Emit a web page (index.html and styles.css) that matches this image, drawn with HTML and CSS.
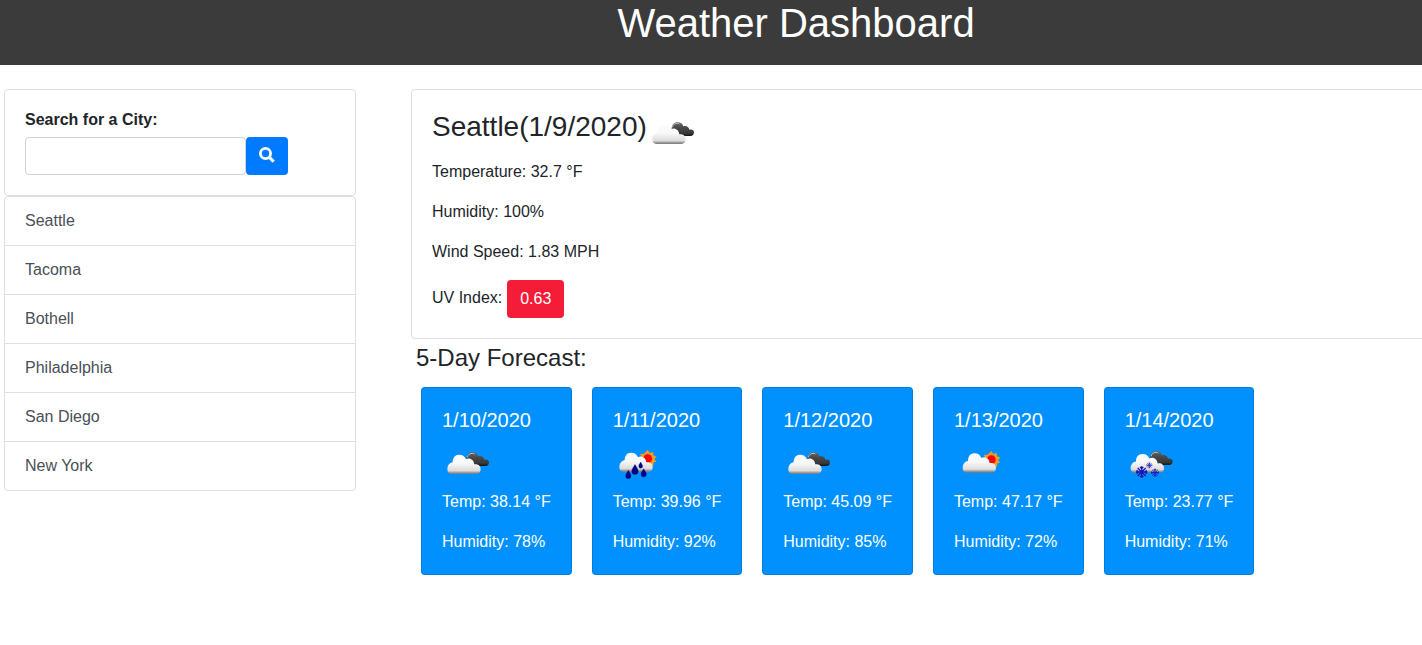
FILE: index.html
```html
<!DOCTYPE html>
<html lang="en">
<head>
<meta charset="utf-8">
<title>Weather Dashboard</title>
<link rel="stylesheet" href="styles.css">
</head>
<body>
<svg class="defs" aria-hidden="true">
  <defs>
    <linearGradient id="light" x1="0" y1="0" x2="0" y2="1">
      <stop offset="0" stop-color="#fcfcfc"/><stop offset=".45" stop-color="#f8f8f8"/><stop offset=".83" stop-color="#dcdcdc"/><stop offset=".93" stop-color="#999"/><stop offset="1" stop-color="#777"/>
    </linearGradient>
    <linearGradient id="dark" x1="0" y1="0" x2="0" y2="1">
      <stop offset="0" stop-color="#666"/><stop offset=".4" stop-color="#484848"/><stop offset=".8" stop-color="#383838"/><stop offset="1" stop-color="#111"/>
    </linearGradient>
    <path id="cloud" fill="url(#light)" d="M34 87C26 87 22 80 22 73C22 62 28 53 38 52C38 38 45 29 57 29C67 29 74 33 78 43C89 37 101 44 103 58C115 56 122 63 122 73C122 81 118 87 109 87Z"/>
    <g id="dark-cloud">
      <path fill="url(#dark)" d="M80 42C80 30 88 22 97 22C107 22 113 26 115 34C123 31 131 35 133 44C141 42 147 46 147 52C147 59 143 63 136 63H100Z"/>
      <path fill="none" stroke="#c4c4c4" stroke-width="3" d="M82 37C84 29 90 25 98 25C101 25 103 26 104 28"/>
    </g>
    <g id="sun">
      <path fill="#ff9d16" d="M0-26L6-17L16-20L17-10L27-6L20 1L26 9L18 11L17 21L7 18L0 26L-6 18L-18 20L-16 9L-26 5L-18-3L-22-14L-11-15Z"/>
      <circle r="16" fill="#ff8c20"/><circle r="13" fill="#fa0505"/>
    </g>
    <path id="drop" fill="#00008c" stroke="#001260" d="M0-12C3-6 8-1 8 5A8 8 0 0 1-8 5C-8-1-3-6 0-12Z"/>
    <g id="flake" fill="none" stroke="#1717b5" stroke-width="4">
      <path d="M0-17V17M-17 0H17M-12-12L12 12M12-12L-12 12M-5-15L0-10L5-15M-5 15L0 10L5 15M-15-5L-10 0L-15 5M15-5L10 0L15 5"/>
    </g>
    <symbol id="cloudy" viewBox="6 -3 150 138"><use href="#dark-cloud"/><use href="#cloud"/></symbol>
    <symbol id="rain" viewBox="9 -3 150 138">
      <use href="#sun" transform="translate(113 41)"/><use href="#cloud" transform="translate(6 -6)"/>
      <use href="#drop" transform="translate(92 60) scale(.75)"/><use href="#drop" transform="translate(75 73) scale(1.2)"/>
      <use href="#drop" transform="translate(55 88)"/><use href="#drop" transform="translate(101 83)"/>
    </symbol>
    <symbol id="sunny" viewBox="12 -3 150 138"><use href="#sun" transform="translate(124 44)"/><use href="#cloud" transform="translate(16 -4)"/></symbol>
    <symbol id="snow" viewBox="15 -3 150 138">
      <use href="#dark-cloud" transform="translate(11 -3)"/><use href="#cloud" transform="translate(10 -1) scale(1 .97)"/>
      <use href="#flake" transform="translate(65 81)"/><use href="#flake" transform="translate(105 83) scale(.72)"/><use href="#flake" transform="translate(88 61) scale(.52)"/>
    </symbol>
  </defs>
</svg>
<header class="banner"><h1>Weather Dashboard</h1></header>
<main class="layout">
  <aside class="sidebar">
    <form class="card search">
      <label for="city">Search for a City:</label>
      <div class="search-row">
        <input id="city" type="text">
        <button type="button" aria-label="Search"><svg viewBox="0 0 16 16" width="16" height="16"><circle cx="6.5" cy="6.5" r="5.1" fill="none" stroke="#fff" stroke-width="2.8"/><path d="M10.4 10.4L14.7 14.7" stroke="#fff" stroke-width="3.2"/></svg></button>
      </div>
    </form>
    <ul class="card cities">
      <li>Seattle</li><li>Tacoma</li><li>Bothell</li><li>Philadelphia</li><li>San Diego</li><li>New York</li>
    </ul>
  </aside>
  <div class="content">
    <section class="card current">
      <h2><span>Seattle(1/9/2020)</span><svg class="icon"><use href="#cloudy"/></svg></h2>
      <p>Temperature: 32.7 °F</p>
      <p>Humidity: 100%</p>
      <p>Wind Speed: 1.83 MPH</p>
      <div class="uv"><span>UV Index:</span><span class="uv-badge">0.63</span></div>
    </section>
    <h3>5-Day Forecast:</h3>
    <section class="forecast">
      <article class="card day"><h4>1/10/2020</h4><svg class="icon"><use href="#cloudy"/></svg><p>Temp: 38.14 °F</p><p>Humidity: 78%</p></article>
      <article class="card day"><h4>1/11/2020</h4><svg class="icon"><use href="#rain"/></svg><p>Temp: 39.96 °F</p><p>Humidity: 92%</p></article>
      <article class="card day"><h4>1/12/2020</h4><svg class="icon"><use href="#cloudy"/></svg><p>Temp: 45.09 °F</p><p>Humidity: 85%</p></article>
      <article class="card day"><h4>1/13/2020</h4><svg class="icon"><use href="#sunny"/></svg><p>Temp: 47.17 °F</p><p>Humidity: 72%</p></article>
      <article class="card day"><h4>1/14/2020</h4><svg class="icon"><use href="#snow"/></svg><p>Temp: 23.77 °F</p><p>Humidity: 71%</p></article>
    </section>
  </div>
</main>
</body>
</html>
```
FILE: styles.css
```css
* { box-sizing: border-box; }
body {
  margin: 0;
  overflow: hidden;
  background: #fff;
  color: #212529;
  font: 16px/24px "Liberation Sans", Arial, sans-serif;
}
h1, h2, h3, h4, p, ul { margin: 0; padding: 0; font-weight: 400; }
.defs { display: block; width: 0; height: 0; }
.banner { height: 65px; padding-left: 170px; background: #3b3b3b; color: #fff; text-align: center; }
.banner h1 { font-size: 40px; line-height: 46px; }
.layout { display: flex; padding: 24px 0 0 4px; }
.sidebar { flex: none; width: 352px; margin-right: 55px; }
.card { border: 1px solid rgba(0, 0, 0, .125); border-radius: 4px; }
.search { height: 107px; padding: 18px 20px 20px; }
.search label { display: block; margin-bottom: 5px; font-weight: 700; }
.search-row { display: flex; }
.search input {
  width: 221px;
  height: 38px;
  border: 1px solid #ced4da;
  border-radius: 4px;
  font: inherit;
}
.search button {
  display: flex;
  align-items: center;
  justify-content: center;
  width: 42px;
  height: 38px;
  padding: 0 0 2px;
  border: 0;
  border-radius: 4px;
  background: #007bff;
}
.cities { list-style: none; color: #495057; }
.cities li { height: 49px; padding: 12px 20px; border-bottom: 1px solid rgba(0, 0, 0, .125); }
.cities li:last-child { height: 48px; border-bottom: 0; }
.content { flex: none; width: 1160px; }
.current { height: 250px; padding: 20px; }
.current h2 { display: flex; height: 34px; margin-bottom: 16px; font-size: 28px; line-height: 34px; }
.current p { margin-bottom: 16px; }
.current h2 .icon { margin-top: 4px; }
.uv { display: flex; gap: 5px; line-height: 36px; }
.uv-badge { width: 57px; height: 38px; border-radius: 4px; background: #f51c38; color: #fff; line-height: 38px; text-align: center; }
.content h3 { padding: 4px 0 15px 5px; font-size: 24px; line-height: 29px; }
.forecast { display: flex; gap: 20px; padding-left: 10px; }
.day { width: 150.67px; height: 188px; padding: 20px; background: #0091ff; color: #fff; white-space: nowrap; }
.day h4 { margin-bottom: 12px; font-size: 20px; line-height: 24px; }
.day p { margin-bottom: 16px; }
.icon { display: block; flex: none; width: 50px; height: 46px; }
```
